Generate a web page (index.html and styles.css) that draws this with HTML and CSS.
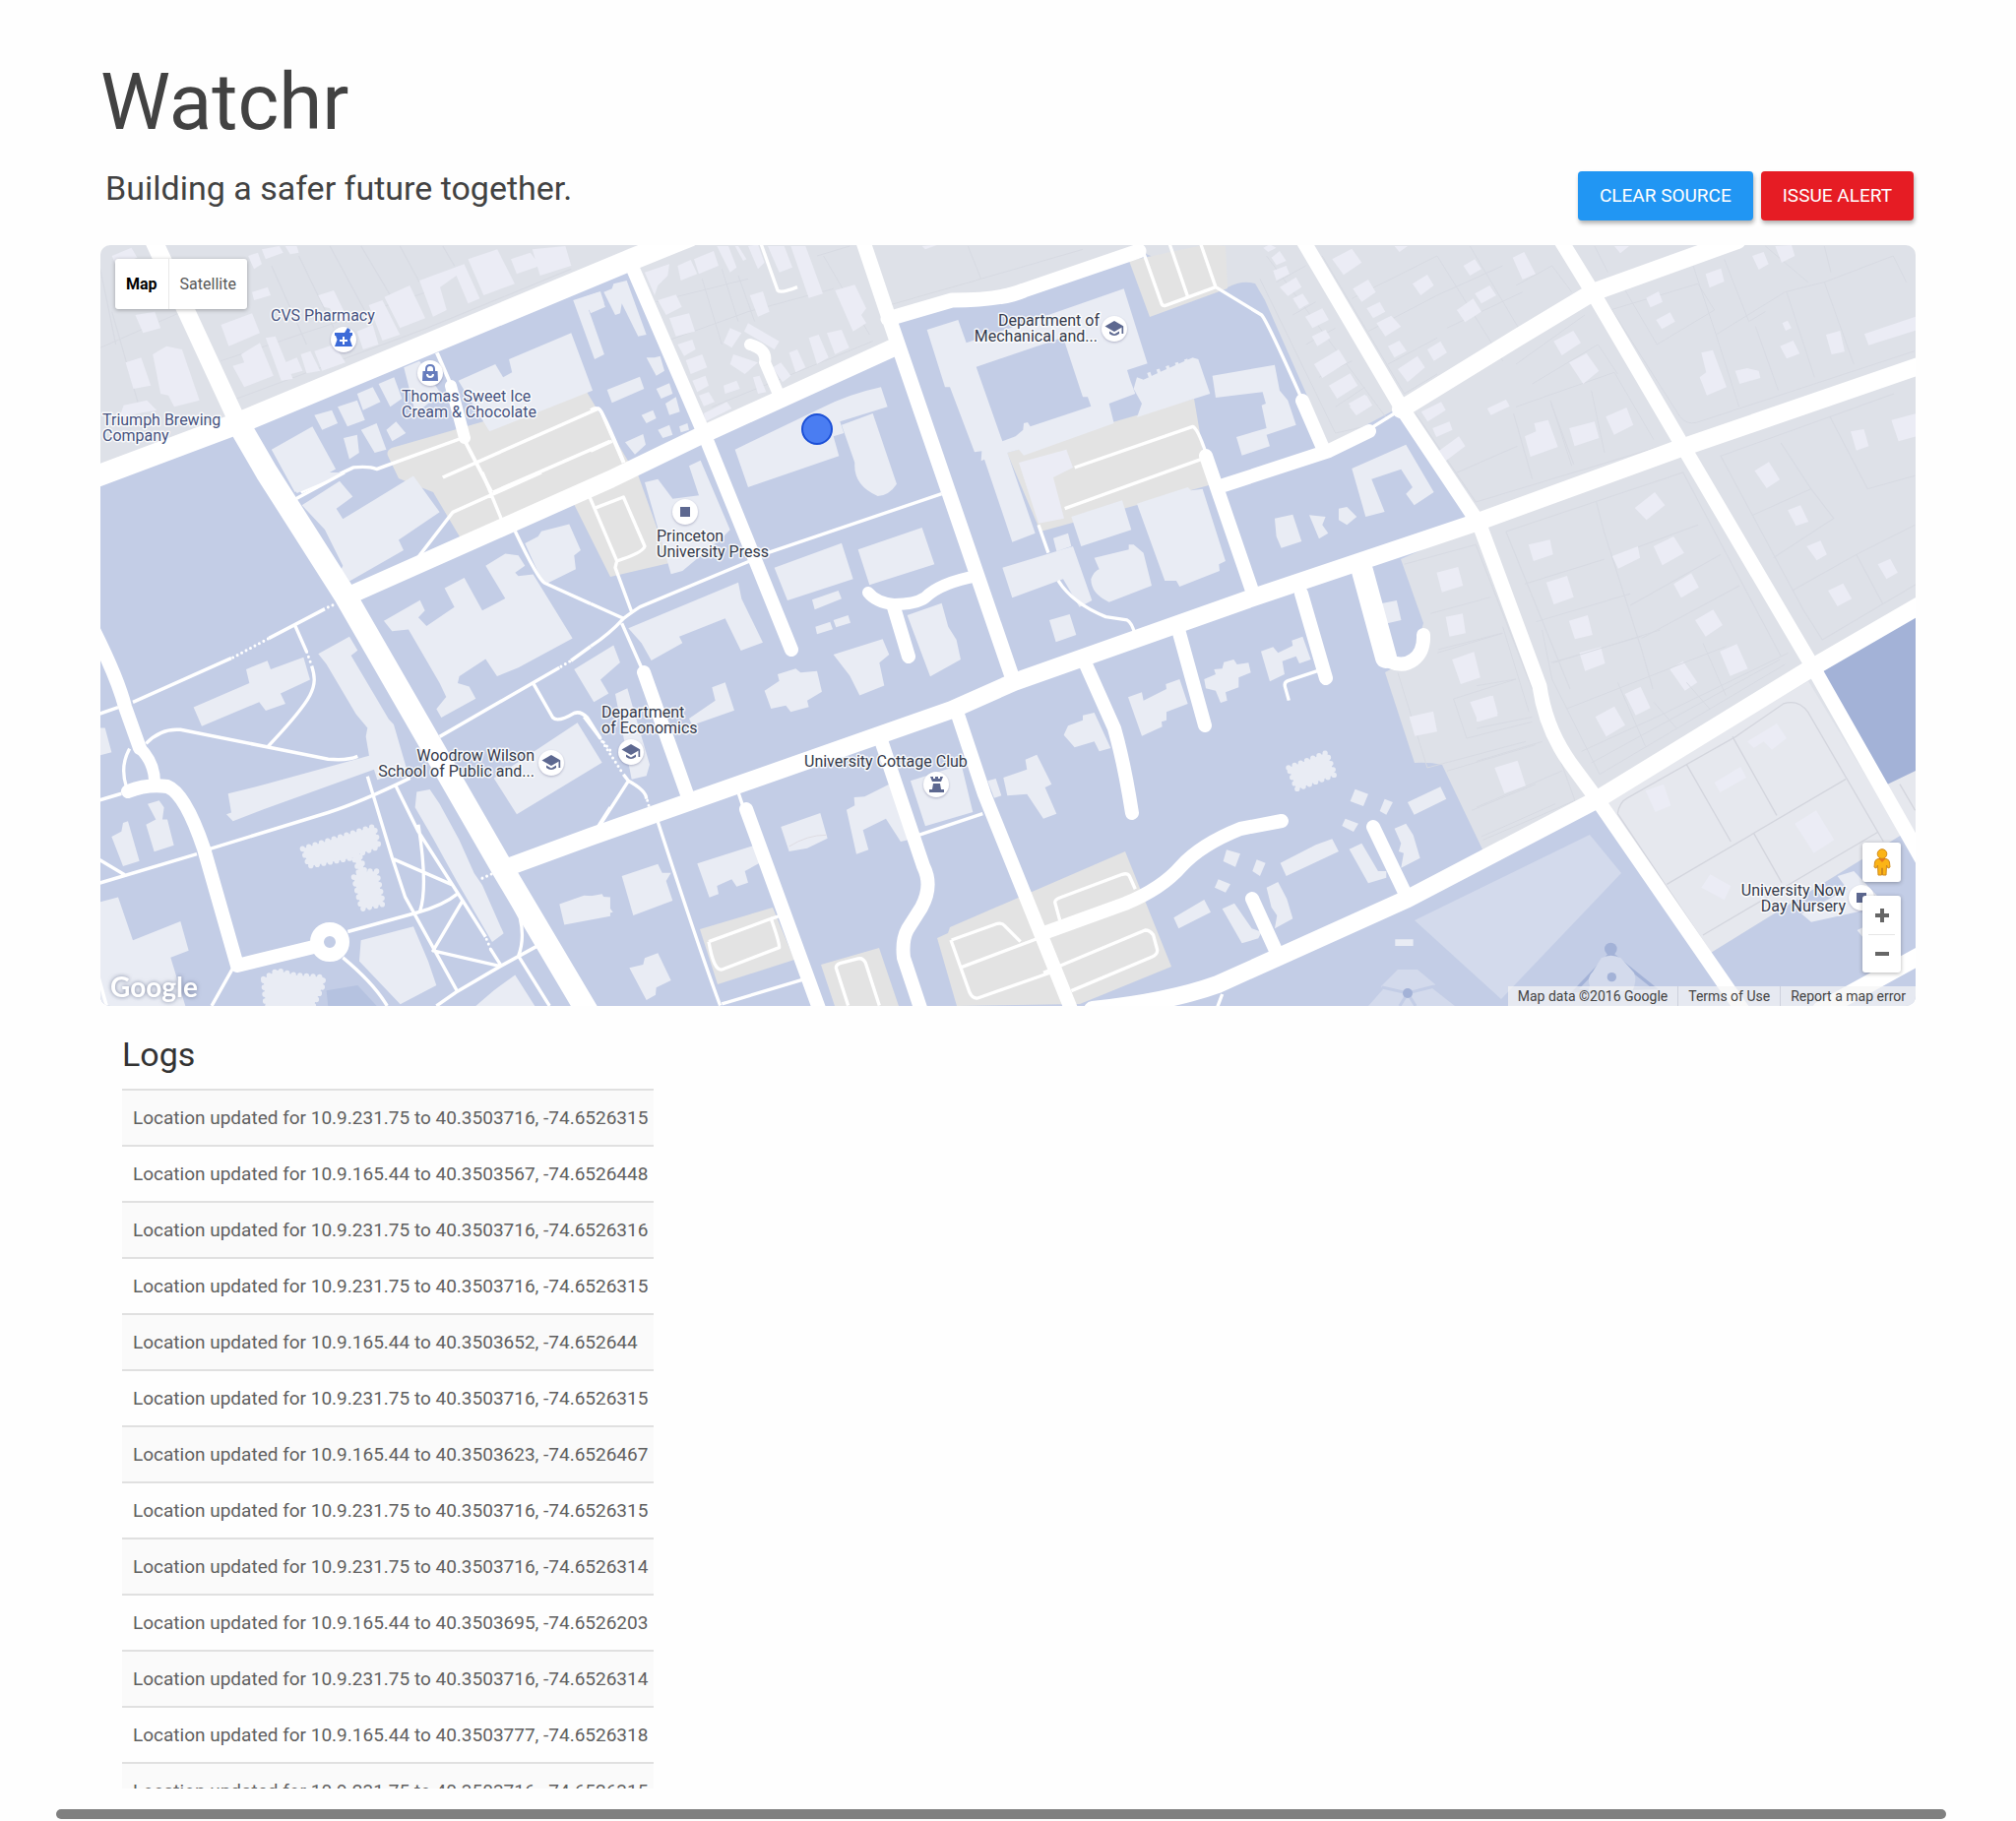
FILE: index.html
```html
<!DOCTYPE html>
<html lang="en">
<head>
<meta charset="utf-8">
<meta name="viewport" content="width=device-width, initial-scale=1">
<title>Watchr</title>
<link rel="stylesheet" href="styles.css">
</head>
<body>
<div class="page">
<main class="content">
  <header class="header">
    <h1 class="title">Watchr</h1>
    <div class="bar">
      <p class="tagline">Building a safer future together.</p>
      <div class="actions">
        <button class="btn btn-blue" type="button">CLEAR SOURCE</button>
        <button class="btn btn-red" type="button">ISSUE ALERT</button>
      </div>
    </div>
  </header>

  <section class="map" aria-label="Map">
    <svg class="map-canvas" viewBox="102 249 1844 773" preserveAspectRatio="xMidYMid slice">
      <defs>
        <g id="cap"><path d="M-9.500-2.500 0-8 9.500-2.500 0 3z"/><path d="M-5 2.500 0 5.500 5 2.500V5Q0 9 -5 5z"/><path d="M7.500-2H9.200V5H7.500z"/></g>
      </defs>
      <rect class="town" x="102" y="249" width="1844" height="773"/>
      <!-- campus grounds -->
      <path class="campus" d="M102 483 242 430 643 263 715 440 905 355 902 320 967 303 1017 303 1157 255 1247 292Q1262 284 1275 288L1285 305 1350 452 1423 413 1503 533 1423 568 1446 633 1436 668 1407 683 1437 775Q1452 774 1465 777L1507 865 1623 812 1767 1022H102z"/>
      <path class="lot-light" d="M1632 813 1837 692 1932 848 1738 968zM1917 797 1946 783V860z"/>
      <path class="campus" d="M1738 968 1932 848 1946 870V1022H1775z"/>
      <path class="dark" d="M1850 682 1946 622V783L1917 797z"/>
      <path class="field" d="M1437 935 1615 848 1647 887 1525 1015z"/>
      <path class="field" d="M1390 1022 1405 1005 1403 1002 1420 985H1440L1458 1000 1455 1004 1478 1022z"/>
      <path class="fieldline" d="M1404 1003 1430 1009 1457 1002M1430 1009 1422 1022M1430 1009 1438 1022"/>
      <circle class="mark" cx="1430" cy="1009" r="5"/>
      <!-- parking -->
      <path class="parking" d="M394 463Q392 458 398 455L596 398 645 480 468 547 440 500 405 486zM583 512 648 482 680 572 620 586zM1147 265 1227 248 1245 250 1247 293 1168 322zM1023 460 1213 405 1228 493 1057 540zM711 944 785 922 807 975 729 1000zM834 980 893 963 913 1022H848zM952 953 963 948 965 942 1143 865 1190 982 1097 1020 972 1022z"/>

      <!-- north-west blocks -->
      <g transform="translate(90 40) scale(.3954 .3333)">
        <path class="parcel" d="M30 940 240 830M60 830 130 1120M250 880 370 1100 870 880 1240 700M340 980 870 770M470 690 560 930M540 660 630 880M620 630 720 850M700 630 780 790M800 630 850 740M910 630 940 690M30 700 70 930"/>
        <path class="house" d="M60 660 110 635 125 665 70 690zM410 660 435 650 445 685 425 700zM445 640 490 630 500 650 455 670zM505 630H535L540 650 518 655zM340 870 420 835 440 895 360 935zM420 770 460 755 468 780 425 795zM370 995 400 985 392 960 440 925 475 1025 400 1060zM455 910 480 905 525 1035 495 1040zM505 985 535 970 550 1010 520 1020zM545 960 570 950 595 1010 560 1018zM580 950 630 930 660 985 600 1010zM590 780 630 765 665 850 640 860 620 820 605 815zM690 890 730 870 745 930 705 945zM720 810 755 795 800 900 755 918zM760 785 825 750 865 850 800 880zM850 735 965 685 1005 790 975 805 945 720 903 755 920 825 885 845zM975 670 1050 640 1095 745 1015 780zM1085 670 1135 650 1160 690 1100 715zM1140 640 1225 630 1240 690 1160 720zM95 985 135 970 160 1055 115 1065zM165 960 200 935 240 945 285 1100 220 1120 205 1085 185 1080zM90 1115 150 1100 175 1130 80 1150zM120 840 170 830 185 880 140 895z"/>
        <path class="hall" d="M470 1250 575 1180 635 1310 530 1380zM580 1145 625 1130 640 1170 600 1190zM640 1120 690 1100 710 1160 665 1180zM690 1080 730 1060 750 1105 705 1130zM745 1050 785 1030 805 1095 775 1120zM810 1000 850 980 905 1080 840 1140zM655 1215 690 1205 695 1260 670 1280zM700 1190 740 1170 765 1250 735 1260zM765 1190 790 1165 815 1200 780 1225zM950 1040 1045 990 1065 1030 1088 1015 1080 975 1240 895 1295 1070 1030 1195zM1245 795 1315 768 1325 805 1285 825 1325 960 1300 975z"/>
        <path class="lane" d="M895 955 930 1050M965 1220 1035 1380M910 1335 1310 1125Q1320 1130 1375 1290M1040 1380 1340 1225M545 1380 680 1305Q720 1300 740 1310L960 1215"/>
      </g>
      <!-- south-west campus -->
      <g transform="translate(100 480) scale(.3333 .3508)">
        <path class="hall" d="M570 0H755L605 60zM620 95 735 25 775 70 725 105 745 135 960 10 1040 115 915 195 930 225 765 315 740 280 745 270 690 165zM870 430 980 370 995 400 975 420 1000 445 1085 390 1055 335 1115 305 1170 400 1240 365 1180 270 1240 235 1280 240 1300 270 1270 290 1280 300 1325 295 1445 480 1280 565 1215 590 1180 540 1100 590 1095 610 1130 620 1150 655 1045 710 1030 685 1060 650 1040 610 945 455 895 460zM1300 205 1340 185 1350 170 1435 150 1470 225 1450 240 1455 280 1370 320 1350 310zM290 680 460 610 450 570 515 545 525 570 625 535 645 600 555 640 570 670 510 690 490 665 315 735zM670 525 765 475 790 515 770 530 885 715 900 730 940 860 850 890 840 860 505 975 410 1010 390 990 405 985 395 930 500 905 825 820 815 765 820 740 785 700 695 555zM150 960 185 950 200 970 195 1005 210 1005 230 1080 170 1098 145 1020 175 1005zM40 1055 70 1040 75 1015 90 1010 125 1125 75 1140zM970 925 1010 918 1040 960 1100 1065 1145 1160 1170 1195 1235 1335 1200 1360 1090 1180 1020 1060 965 970zM800 1355 960 1315 1005 1415 1030 1485 920 1540 795 1415zM0 1245 60 1230 105 1355 250 1300 275 1385 220 1405 265 1545H0zM0 740 20 740 40 810 0 820zM1205 885 1460 725 1535 840 1275 990zM1405 1250 1480 1225 1560 1230V1285L1420 1310zM1450 570 1570 500 1590 550 1530 600 1555 640 1510 665zM1150 1545 1205 1500 1270 1455 1330 1545z"/>
        <path class="hall scallop" d="M622 1090 840 1025 855 1083 795 1105 812 1155 848 1155 868 1250 802 1264 778 1172 795 1155 778 1115 642 1140z"/>
        <path class="hall scallop" d="M503 1467 545 1442 600 1456 685 1462 685 1485 655 1545H510z"/>
        <path class="deep" d="M695 1500 790 1485 850 1547H700z"/>
        <path class="lane" d="M0 700 60 680M105 665 405 538M520 480 690 395M600 445 635 520M650 560C670 620 660 650 515 795M145 785Q190 740 250 745L700 830Q760 835 790 822M0 950 70 930M0 1190 300 1105M340 1090 700 985Q800 955 950 885M0 1120 80 1165M820 880 895 1115 935 1230 1095 1505M905 905 975 1040 1110 1240 1180 1345M1195 1380 1225 1425M975 1020Q1005 1200 980 1270M900 1120 1080 1195M760 1330 970 1275Q1050 1255 1095 1220M1110 1240 1020 1385 1225 1430M745 1405Q840 1480 880 1545M410 1435 345 1545M1030 1545 1090 1505 1225 1430 1340 1370M1210 1160Q1270 1260 1285 1290 1300 1350 1280 1400L1375 1545M1040 765 1405 565M1440 545 1500 504M1325 610 1385 710Q1400 725 1450 697 1470 690 1490 710L1530 770M595 80 750 0M975 245 1080 115 1350 0M1170 0 1230 140M1270 170Q1340 310 1360 320L1500 380M1520 1030 1560 970M95 800Q65 850 85 910M0 1460 25 1545"/>
        <path class="dots" d="M410 536 520 480M700 390 725 380M635 520 650 560M1410 562 1440 545M1530 770 1560 805M1183 1352 1195 1380M1170 1175 1205 1160"/>
      </g>
      <!-- blocks round the press -->
      <g transform="translate(600 240) scale(.3333)">
        <path class="parcel" d="M200 200 480 130M230 320 480 230 740 160M340 130 400 330M400 100 450 260M450 120 500 260M710 60 850 300M850 60 910 210 1190 130 1500 40M1150 30 1190 130M370 520 860 320M690 60 790 30"/>
        <path class="house" d="M165 110 240 85 235 120 205 150 195 180zM265 90 305 72 325 115 275 135zM315 70 375 45 390 90 330 115zM385 30H420L445 95 425 110zM450 30 475 70 465 75 440 30zM480 30 510 25 530 80 510 100zM540 30H590L615 95 575 110zM610 30H655L708 175 665 188zM745 165 805 148 840 220 825 240 840 265 800 290zM485 180 525 168 545 230 510 245zM205 195 260 178 278 215 230 240zM240 250 300 235 318 290 260 305zM265 330 310 315 320 345 285 365zM290 378 340 360 355 400 305 420zM310 440 350 425 360 455 325 475zM330 485 360 475 378 505 345 518zM345 540 415 505 430 525 350 565zM480 265 575 320 560 345 468 290zM425 280 460 295 430 340 405 325zM435 360 510 385 470 420 425 390zM605 355 630 345 655 400 625 415zM665 310 695 300 725 370 690 390zM720 295 765 285 788 340 745 360zM555 400 580 385 610 425 585 445zM495 430 515 425 535 475 510 480zM405 455 445 440 455 465 410 480zM1010 30 1060 25 1020 40z"/>
        <path class="hall" d="M-20 185 25 170 45 215 0 235zM40 170 65 160 70 145 110 135 170 300 145 305 95 205 90 235 75 240zM50 468 150 428 163 465 65 508zM170 370 195 370 212 365 225 410 200 425zM200 465 240 448 250 480 215 495zM228 510 260 490 272 535 240 545zM155 545 190 530 200 555 170 570zM205 590 240 575 250 605 220 615zM270 580 295 570 300 590 275 598zM105 628 160 603 168 635 135 665zM440 650 700 525Q790 480 885 460L905 520 760 565 772 600 740 610 757 670 480 765zM765 575 860 540 933 755Q910 790 875 792 800 760 805 690zM165 750 205 740 250 800 330 790 300 700 335 683 425 895 405 915 280 1020 245 1030zM560 1010 765 935 800 1045 600 1110zM815 955 1010 888 1048 1000 850 1063zM675 1108 755 1080 765 1105 683 1138zM685 1190 730 1175 738 1198 690 1213zM740 1170 785 1155 792 1178 748 1192zM115 1195 450 1055 460 1105 525 1238 458 1263 410 1165 270 1220 280 1240 185 1293 155 1240zM965 1155 1070 1118 1090 1190 1115 1230 1128 1290 1035 1342zM740 1275 890 1228 910 1275 880 1300 895 1370 820 1400 790 1340z"/>
        <path class="lane" d="M540 965 1070 785M485 990 150 1130Q120 1150 100 1165 60 1210 0 1250M0 1120 100 1165M95 1180 155 1315M10 830 100 795 165 945Q160 965 80 990L75 1010 125 1145M-5 790 80 990M0 530Q25 515 35 540L100 690M0 655 65 625M520 25 570 165Q580 175 630 155"/>
        <path class="arrow" d="M286 475 300 512M290 512 303 528 308 505z"/>
      </g>
      <!-- engineering quadrangle and the streets east of it -->
      <g transform="translate(980 240) scale(.3333)">
        <path class="parcel" d="M900 130 1130 600 1220 580M920 60 1290 560M950 140 1040 90M1000 240 1070 200M1040 330 1130 280M1080 430 1180 380M1130 520 1220 460M1090 60 1340 480 1440 420M1180 190 1440 60M1230 290 1440 180M1290 390 1440 310M1440 60 1640 380M1540 30 1700 300M1440 180 1640 90M1470 280 1700 170"/>
        <path class="house" d="M910 35 930 25 950 35 925 48zM935 65 960 45 980 75 950 88zM940 105 980 90 990 115 950 135zM960 155 1010 125 1027 155 985 182zM1000 190 1030 175 1050 205 1020 222zM1038 245 1090 220 1110 255 1060 280zM1058 305 1100 285 1115 310 1075 335zM1065 390 1140 345 1165 385 1090 432zM1110 455 1175 418 1198 455 1135 495zM1170 510 1220 482 1242 515 1195 545zM1120 70 1180 38 1210 80 1155 118zM1183 160 1230 132 1253 170 1210 200zM1225 220 1265 200 1282 230 1245 250zM1255 265 1300 242 1330 275 1282 305zM1290 335 1325 318 1347 350 1310 370zM1320 405 1380 365 1403 400 1350 445zM1365 145 1410 117 1430 150 1390 180zM1310 30H1350L1325 48zM1410 345 1450 320 1470 355 1430 380zM1500 225 1550 190 1575 230 1525 262zM1555 175 1600 150 1620 180 1575 205zM1490 410 1540 380 1560 410 1510 440zM1520 90 1555 70 1575 100 1540 120z"/>
        <path class="hall" fill-rule="evenodd" d="M-115 285-20 255 5 325 270 235 485 160 557 388 495 408 505 440 520 480 440 510 455 570 180 668 165 650 130 660 215 905 145 932 60 680 50 685 52 655 30 658-45 460-60 460zM35 398 300 308 360 490 375 490 385 518 200 580 192 567 180 570 178 590 155 610 115 625z"/>
        <path class="hall" d="M525 430 545 437 600 412 695 370 712 375 748 480 700 495 525 552 540 510 515 465zM755 425 945 392 960 470 985 500 1010 575 920 605 930 640 845 668 828 612 920 585 905 515 918 510 908 475 765 492zM325 855 480 805 508 895 355 945zM525 815 680 765 690 775 725 770 795 990 775 1000 777 1020 655 1068 645 1050 610 1050zM270 920 315 905 325 945 280 960zM115 1010 330 945 388 1110 350 1130 300 1045 145 1102zM395 980 500 955 500 940 515 940 545 965 570 1065 440 1115Q385 1090 385 1045 395 1020 410 1015zM258 1170 320 1152 340 1215 278 1237zM945 860 1000 848 1027 930 965 950 950 915zM1050 850 1100 855 1090 880 1108 905 1080 922zM1140 830 1165 825 1195 855 1165 880 1140 865zM1180 708 1345 635 1430 780 1370 820 1345 785 1365 765 1330 710 1240 740 1280 840 1222 855z"/>
        <path class="comb" d="M560 428 700 378"/>
        <path class="house" d="M165 690 310 650 330 705 270 735 303 860 225 875z"/>
        <path class="lane" d="M545 50 600 205Q603 213 612 211L765 155 720 25M625 25 680 185M765 155 905 240Q920 255 1025 490M335 705 695 580Q710 585 735 660M305 830 720 680M225 880 255 965M285 1050Q330 1120 430 1160L495 1170Q508 1175 520 1215M1230 590 1310 540"/>
      </g>
      <!-- eating clubs -->
      <g transform="translate(600 640) scale(.3333)">
        <path class="hall" d="M75 195 112 178 130 240 180 410 170 445 125 455zM300 270 380 215 370 175 410 160 438 245 310 290zM530 185 575 155 570 135 625 118 640 130 690 125 705 188 660 215 665 235 610 250 595 230 550 240zM580 600 700 558 722 635 660 665 605 675zM780 548 805 535 803 510 835 508 910 470 968 640 945 645 900 575 830 610 847 670 810 683zM975 460 1130 410 1165 555 1020 598zM1210 460 1235 453 1252 505 1230 512zM1258 450 1330 425 1325 395 1360 380 1405 470 1385 480 1420 560 1380 575 1330 500 1270 505zM325 712 495 658 515 710 470 735 480 770 445 782 430 760 385 780 390 805 362 815zM95 750 205 713 218 740 245 740 230 765 250 825 130 870zM-50 820 35 805 50 835 68 860-20 880zM118 1030 160 1020 165 1000 205 985 245 1068 200 1090 198 1112 170 1128z"/>
        <path class="seam" d="M605 660Q660 625 718 625"/>
        <path class="lane" d="M360 950 550 880Q575 950 575 968L400 1035Q375 1040 360 950M550 880 580 870M785 1145 748 1030Q748 1020 760 1016L815 1002Q830 998 838 1015L880 1145M1100 945 1240 895Q1255 892 1262 902L1310 950M1098 945 1155 1105Q1165 1125 1180 1122L1400 1045M1130 1028 1390 930M205 585Q330 970 395 1145M400 1140 650 1065M450 495 465 540M1000 625 1195 560M-20 265 30 330M100 440 115 460Q170 490 170 515M115 460 25 600"/>
        <path class="dots" d="M35 340 100 440M173 520 180 545"/>
      </g>
      <!-- apartments -->
      <g transform="translate(1060 620) scale(.3333)">
        <path class="parcel" d="M1080 190 1170 480 1470 400M1200 130 1400 70M1250 270 1440 210M1400 50 1480 310M1250 270 1290 390 1490 340M1230 490 1500 410M1305 610 1500 530M1335 690 1560 590"/>
        <path class="hall" d="M258 265 300 250 305 275 375 240 373 225 415 210 440 285 375 310 375 335 360 340 362 355 300 383zM490 210 525 195 520 180 545 178 550 158 580 150 590 165 625 160 632 190 595 205 595 235 555 250 560 275 540 282 525 245 495 238zM663 125 700 112 715 130 760 108 757 92 790 80 815 150 780 162 770 140 728 155 735 195 690 217zM62 380 75 352 120 335 120 320 155 312 205 420 170 430 155 400 95 418zM950 545 990 560 975 597 935 582zM1040 575 1065 585 1045 623 1025 612zM920 635 960 650 945 675 910 657zM1110 585 1210 538 1228 575 1130 623zM1070 665 1105 650 1127 685 1148 755 1090 785 1098 740 1083 735 1090 710zM932 728 970 710 1020 795 1045 795 1045 815 990 832zM558 730 600 742 585 782 548 765zM650 760 677 770 660 810 637 795zM533 820 570 835 555 860 522 845zM722 770 830 715 880 697 900 735 740 810zM397 937 490 882 510 920 412 970zM680 845 715 828 742 880 760 940 705 970 712 930 695 905zM545 910 582 893 635 970 665 980 655 1000 605 1015zM1072 1003H1127V1023H1072z"/>
        <path class="hall scallop" d="M747 480 863 434 889 501 772 545z"/>
        <path class="house" d="M1300 280 1365 260 1385 322 1325 340zM1115 325 1188 308 1200 370 1132 383z"/>
        <path class="lane" d="M50 945 35 890Q35 882 50 876L240 805Q256 800 262 810L280 850M0 1105 310 975Q325 975 335 990L347 1035Q348 1050 330 1057L85 1160M835 185 745 215Q732 220 737 235L748 275M545 1170 530 1210"/>
      </g>
      <!-- north-east streets -->
      <g transform="translate(1540 150) scale(.3333)">
        <path class="parcel" d="M270 460 500 820Q520 845 550 838L1215 620M330 430 430 600 605 495 555 415 270 500M540 360 610 570 680 790M635 340 710 530 760 500M610 570 820 440 940 410 1150 330 1190 410M760 300 890 410M730 545 800 740M825 440 910 700M940 410 1030 660M940 300 960 380M0 660 210 510M50 720 250 600 310 690M0 790 300 685 420 890M105 770 170 970M230 740 270 930M0 420 110 360 170 440M240 300 280 380"/>
        <path class="house" d="M-10 335 25 318 60 385 20 402zM300 300H345L318 322zM578 385 625 368 635 408 590 427zM720 330 755 318 770 355 740 372zM790 300 840 297 850 330 810 350zM397 458 435 438 447 470 410 487zM427 525 470 502 485 530 445 553zM115 590 175 558 198 595 140 633zM162 655 215 627 253 680 205 720zM565 625 600 617 642 730 582 755 560 700 580 685zM668 680 705 672 740 680 745 702 682 720zM805 605 845 588 865 628 825 643zM812 535 828 527 840 550 822 558zM945 570 988 558 1002 622 962 630zM1062 568 1218 515V557L1075 602z"/>
      </g>
      <g transform="translate(1350 400) scale(.3827 .3333)">
        <path class="parcel" d="M470 420 940 240 1200 800M470 420 640 900M710 330 730 420 830 780 860 900M520 580 730 505M550 695 800 610M590 820 830 740M790 480 980 400M800 645 1040 490M830 745 1090 585M1500 0 1040 190 1260 660 1310 750 1560 580M1125 370 1280 290 1340 380 1180 500M1230 600 1400 490 1555 400M1330 70 1430 290 1555 250M1200 150 1280 290M1400 490 1470 640M340 240 500 160M490 60 540 260M590 30 650 215M230 60 390 330 910 150M390 460 540 900M200 520 390 460M270 670 430 620M290 780 460 730"/>
        <path class="house" d="M55 40 100 5 115 35 72 65zM245 55 298 25 310 50 262 85zM275 105 320 85 328 110 285 132zM285 180 345 130 362 160 310 205zM420 45 470 18 480 38 430 65zM520 130 550 115 545 90 582 80 608 162 535 192zM638 105 705 85 717 135 652 160zM735 70 790 42 808 95 757 125zM1385 115 1420 108 1433 160 1400 173zM1493 80 1560 60V130L1512 145zM1130 235 1168 208 1197 262 1162 288zM1218 355 1252 340 1273 390 1240 403zM1268 465 1305 448 1322 490 1295 508zM1325 600 1365 578 1388 625 1350 648zM1457 520 1490 503 1510 545 1480 565zM812 348 865 300 892 340 843 385zM752 495 820 465 826 500 768 533zM862 465 915 435 943 485 885 523zM530 460 587 445 595 490 543 510zM577 575 632 555 650 620 597 642zM637 692 687 675 700 735 653 748zM665 790 722 772 733 822 680 845zM915 580 962 547 982 590 935 622zM972 690 1020 658 1045 705 1000 740zM1038 785 1083 763 1112 838 1065 860zM905 840 940 815 978 880 945 905zM286 545 343 528 356 585 300 605zM310 680 355 670 363 730 320 740zM327 810 385 787 402 865 350 885z"/>
        <path class="hall" d="M137 640 180 630 192 690 155 700z"/>
      </g>
      <!-- south-east streets -->
      <g transform="translate(1500 640) scale(.3333)">
        <path class="parcel" d="M0 170 120 150M0 300 170 265M0 400 200 340M0 540 260 430M110 0 300 520 20 640M235 100 560 0M275 240 760 50M320 370 560 260 950 70M200 0 230 150 375 440 940 105M350 405 925 90M430 160 515 355M540 220 610 300M640 160 710 240M690 40 760 200"/>
        <path class="parcel strong" d="M430 560Q435 525 460 512L790 325 935 225Q980 210 1010 250L1240 645M640 410 775 645M780 325 915 565M580 775 1125 455M845 620 930 770M690 930 1225 615M430 560 715 985M1290 470 1337 550"/>
        <path class="house" d="M452 195 500 173 530 238 485 260zM362 265 420 233 453 290 395 325zM0 215 50 200 65 255 0 280zM55 420 125 398 150 475 85 498zM515 490 570 470 592 535 545 555zM725 465 805 417 822 450 742 495zM825 340 915 285 945 330 900 365 875 340 845 360zM970 590 1035 550 1090 640 1028 680zM712 745 775 780 755 823 685 785z"/>
        <path class="hall" d="M1100 750 1150 735 1240 830 1180 855 1020 890 990 865 1130 790zM1160 915 1180 905V940z"/>
        <path class="base" d="M300 1100 409 985 540 1090z"/>
        <path class="field" d="M345 1085Q335 1060 355 1040L380 1000Q409 985 440 1000L480 1045Q490 1070 475 1100H340z"/>
        <circle class="mark" cx="409" cy="972" r="19"/><circle class="mark" cx="412" cy="1058" r="14"/>
      </g>

      <!-- streets -->
      <g class="road">
        <path class="w12" d="M792 403 777 368Q780 355 762 350M882 602Q890 612 908 614 930 614 940 607 955 592 993 585M458 392 472 445M142 760Q158 775 157 798"/>
        <path class="w14" d="M643 273 715 440 804 660M895 752 938 880Q948 900 936 922L922 944Q916 955 918 973L937 1030M972 723 1000 807 1090 1030M654 683 698 807M758 822 834 1030M1063 947 1143 918Q1180 903 1200 880 1220 858 1260 842L1302 834M1103 675 1132 740Q1142 775 1150 826M1198 643 1224 737M1322 603 1347 689M1412 672C1430 680 1447 668 1446 645M1272 913 1298 970M1395 840 1430 913M1225 463 1273 603M1323 407 1343 453M1243 493 1350 458 1391 438M908 617 923 667M95 640Q120 690 127 718L142 760M130 804Q150 796 170 799 188 806 207 862L241 981 335 958"/>
        <path class="w16" d="M875 240 902 320 1030 693M902 324 967 305Q1017 305 1040 295L1157 255M1320 238 1423 413 1503 533 1564 697Q1570 740 1595 775L1623 813 1770 1026M1583 240 1618 297 1710 454 1843 680 1952 872"/>
        <path class="w18" d="M154 240 242 430M350 607 620 487 715 441 908 353M510 883 600 850 890 748 967 721 1030 693 1273 607 1499 531 1705 456 1952 371M1423 416 1540 344 1618 297 1765 244M1952 614 1843 677 1623 812 1430 913 1297 973 1237 1000Q1187 1018 1110 1026"/>
        <path class="w18" d="M1952 970 1850 1026"/>
        <path class="w22" d="M90 487 242 430 643 263 700 240M1384 580 1408 668"/>
        <path class="w24" d="M242 430 271 480 350 604 509 880 598 1030"/>
        <circle class="ring" cx="335" cy="957" r="13"/>
      </g>

      <!-- places -->
      <g class="pin">
        <circle cx="349" cy="345" r="13"/><circle cx="437" cy="379" r="13"/><circle cx="696" cy="520" r="13"/><circle cx="1132" cy="334" r="13"/><circle cx="641" cy="764" r="13"/><circle cx="560" cy="775" r="13"/><circle cx="951" cy="797" r="13"/><circle cx="1891" cy="912" r="13"/>
      </g>
      <path class="icon-blue" d="M340 338H350L353 333 356 335 355 338H358V341H357L355.500 345 358 352H340L342.500 345 341 341H340z"/>
      <path class="icon-plus" d="M349 342V350M345 346H353"/>
      <path class="icon-shop" d="M429.500 377H444.500L445 387H429z"/>
      <path class="icon-handle" d="M433 378V375Q433 371 437 371T441 375V378"/>
      <path class="icon-smile" d="M434 380Q434 383 437 383T440 380"/>
      <g class="icon-slate">
        <path d="M691 515H701V525H691zM1886 907H1896V917H1886z"/>
        <use href="#cap" x="1132" y="334"/><use href="#cap" x="641" y="764"/><use href="#cap" x="560" y="775"/>
        <path d="M945 789H948V791H950V789H953V791H955V789H958L956 794H947zM948 796H955L956 802H959V805H944V802H947z"/>
      </g>
      <circle class="here" cx="830" cy="436" r="15"/>
      <g class="label">
        <g class="shop"><text x="275" y="326">CVS Pharmacy</text>
        <text x="408" y="408">Thomas Sweet Ice<tspan x="408" dy="16">Cream &amp; Chocolate</tspan></text>
        <text x="104" y="432">Triumph Brewing<tspan x="104" dy="16">Company</tspan></text></g>
        <text x="667" y="550">Princeton<tspan x="667" dy="16">University Press</tspan></text>
        <text x="611" y="729">Department<tspan x="611" dy="16">of Economics</tspan></text>
        <text x="817" y="779">University Cottage Club</text>
        <g class="end"><text x="1117" y="331">Department of<tspan x="1115" dy="16">Mechanical and...</tspan></text>
        <text x="543" y="773">Woodrow Wilson<tspan x="543" dy="16">School of Public and...</tspan></text>
        <text x="1875" y="910">University Now<tspan x="1875" dy="16">Day Nursery</tspan></text></g>
      </g>
      <text class="logo" x="112" y="1013">Google</text>
    </svg>

    <div class="map-type">
      <button class="type-btn selected" type="button">Map</button>
      <button class="type-btn" type="button">Satellite</button>
    </div>
    <div class="map-tools">
      <button class="tool" type="button" aria-label="Street View">
        <svg width="18" height="28" viewBox="0 0 18 28"><path class="peg" d="M5 10.500Q2 11 1.500 14L1 19 3 20 4.500 17 5 27H8.500V20H9.500V27H13L13.500 17 15 20 17 19 16.500 14Q16 11 13 10.500z"/><circle class="peg" cx="9" cy="5.500" r="4.800"/><path class="scarf" d="M5.500 10.500H12.500L9 14z"/></svg>
      </button>
      <div class="zoom">
        <button class="tool" type="button" aria-label="Zoom in"><svg width="16" height="16" viewBox="0 0 16 16"><path class="sign" d="M8 1V15M1 8H15"/></svg></button>
        <button class="tool" type="button" aria-label="Zoom out"><svg width="16" height="16" viewBox="0 0 16 16"><path class="sign" d="M1 8H15"/></svg></button>
      </div>
    </div>
    <div class="credits">
      <span class="credit">Map data ©2016 Google</span>
      <a class="credit" href="#terms">Terms of Use</a>
      <a class="credit" href="#report">Report a map error</a>
    </div>
  </section>

  <section class="logs">
    <h2 class="logs-title" id="logs-title">Logs</h2>
    <table class="log-table" aria-labelledby="logs-title">
      <tbody>
        <tr><td>Location updated for 10.9.231.75 to 40.3503716, -74.6526315</td></tr>
        <tr><td>Location updated for 10.9.165.44 to 40.3503567, -74.6526448</td></tr>
        <tr><td>Location updated for 10.9.231.75 to 40.3503716, -74.6526316</td></tr>
        <tr><td>Location updated for 10.9.231.75 to 40.3503716, -74.6526315</td></tr>
        <tr><td>Location updated for 10.9.165.44 to 40.3503652, -74.652644</td></tr>
        <tr><td>Location updated for 10.9.231.75 to 40.3503716, -74.6526315</td></tr>
        <tr><td>Location updated for 10.9.165.44 to 40.3503623, -74.6526467</td></tr>
        <tr><td>Location updated for 10.9.231.75 to 40.3503716, -74.6526315</td></tr>
        <tr><td>Location updated for 10.9.231.75 to 40.3503716, -74.6526314</td></tr>
        <tr><td>Location updated for 10.9.165.44 to 40.3503695, -74.6526203</td></tr>
        <tr><td>Location updated for 10.9.231.75 to 40.3503716, -74.6526314</td></tr>
        <tr><td>Location updated for 10.9.165.44 to 40.3503777, -74.6526318</td></tr>
        <tr><td>Location updated for 10.9.231.75 to 40.3503716, -74.6526315</td></tr>
      </tbody>
    </table>
  </section>
</main>
<div class="scroll-thumb"></div>
</div>
</body>
</html>
```
FILE: styles.css
```css
* { box-sizing: border-box; }
body { margin: 0; background: #fefefe; color: #424242; font-family: Roboto, "Liberation Sans", sans-serif; }
.page { display: flex; flex-direction: column; height: 100vh; }
.content { flex: 1; min-height: 0; display: flex; flex-direction: column; padding: 57px 102px 0; }

.title { margin: 0; font-size: 80px; line-height: 94px; font-weight: 400; }
.bar { display: flex; justify-content: space-between; padding: 23px 2px 25px 5px; }
.tagline { margin: 0; font-size: 34px; line-height: 34px; }
.actions { display: flex; gap: 8px; }
.btn { height: 50px; padding: 0 22px; border: 0; border-radius: 4px; color: #fff; font: 400 19px/50px Roboto, sans-serif; box-shadow: 1px 3px 4px rgba(0, 0, 0, .3); }
.btn-blue { background: #2196f3; }
.btn-red { background: #e61c24; }

.map { position: relative; flex: none; height: 773px; border-radius: 10px; overflow: hidden; }
.map-canvas { display: block; width: 100%; height: 100%; }
.town { fill: #dee1e8; }
.campus { fill: #c3cde6; }
.lot-light { fill: #e6e8ee; }
.dark, .mark { fill: #a3b2d7; }
.deep { fill: #b5c2e0; }
.field { fill: #d3daec; }
.fieldline { fill: none; stroke: #c3cde6; stroke-width: 3; }
.base { fill: none; stroke: #a3b2d7; stroke-width: 10; }
.parking { fill: #e3e3e3; }
.hall { fill: #e9ecf4; }
.house { fill: #ebecf5; }
.scallop { stroke: #e9ecf4; stroke-width: 16; stroke-linecap: round; stroke-dasharray: 0 20; }
.comb { fill: none; stroke: #e9ecf4; stroke-width: 24; stroke-dasharray: 10 20; }
.seam { fill: none; stroke: #dedce2; stroke-width: 3; }
.parcel { fill: none; stroke: #d7dae2; stroke-width: 3; }
.strong { stroke: #d3d5dd; stroke-width: 4; }
.lane { fill: none; stroke: #fff; stroke-width: 10; stroke-linejoin: round; }
.dots { fill: none; stroke: #fff; stroke-width: 9; stroke-linecap: round; stroke-dasharray: 0 15; }
.arrow { fill: #b7bfd8; stroke: #b7bfd8; stroke-width: 6; }
.road { fill: none; stroke: #fff; stroke-linecap: round; stroke-linejoin: round; }
.w12 { stroke-width: 12; }
.w14 { stroke-width: 14; }
.w16 { stroke-width: 15; }
.w18 { stroke-width: 18; }
.w22 { stroke-width: 22; }
.w24 { stroke-width: 23; }
.ring { fill: #c3cde6; stroke-width: 14; }
.pin { fill: #fff; filter: drop-shadow(0 1px 1px rgba(90, 90, 130, .4)); }
.icon-blue { fill: #3d6bd8; }
.icon-plus { fill: none; stroke: #fff; stroke-width: 2; }
.icon-shop { fill: #667cbd; }
.icon-handle { fill: none; stroke: #667cbd; stroke-width: 2; }
.icon-smile { fill: none; stroke: #fff; stroke-width: 2; }
.icon-slate { fill: #5d6890; }
.here { fill: #4a7df2; stroke: #1b4fd6; stroke-width: 2; }
.label { font-size: 16px; fill: #343a4b; stroke: rgba(255, 255, 255, .85); stroke-width: 3; stroke-linejoin: round; paint-order: stroke; }
.shop { fill: #46527f; }
.end { text-anchor: end; }
.logo { font: 700 28px Lato, sans-serif; fill: #fff; filter: drop-shadow(0 0 2px rgba(100, 110, 140, .8)); }

.map-type { position: absolute; left: 15px; top: 14px; display: flex; border-radius: 3px; background: #fff; box-shadow: 0 1px 4px rgba(0, 0, 0, .3); }
.type-btn { height: 51px; padding: 0 11px; border: 0; background: none; color: #565656; font: 400 16px Roboto, sans-serif; }
.selected { color: #000; font-weight: 700; border-right: 1px solid #e8e8e8; }
.map-tools { position: absolute; right: 15px; bottom: 34px; display: grid; gap: 14px; }
.tool { display: grid; place-items: center; width: 39px; height: 40px; padding: 0; border: 0; border-radius: 3px; background: #fff; box-shadow: 0 1px 4px rgba(0, 0, 0, .3); }
.zoom { border-radius: 3px; background: #fff; box-shadow: 0 1px 4px rgba(0, 0, 0, .3); }
.zoom .tool { height: 39px; box-shadow: none; background: none; }
.zoom .tool + .tool { background: linear-gradient(#e6e6e6, #e6e6e6) center top / 27px 1px no-repeat; }
.sign { fill: none; stroke: #666; stroke-width: 4; }
.peg { fill: #fbb416; stroke: #d08a1c; stroke-width: 1; }
.scarf { fill: #e5761c; }
.credits { position: absolute; right: 0; bottom: 0; display: flex; height: 20px; background: rgba(245, 245, 245, .7); }
.credit { padding: 0 10px; color: #444; font-size: 14px; line-height: 20px; text-decoration: none; }
.credit + .credit { border-left: 1px solid #cdd1dc; }

.logs { flex: 1; min-height: 0; overflow: hidden; padding: 27px 22px 0; }
.logs-title { margin: 0 0 12px; font-size: 34px; line-height: 45px; font-weight: 400; color: #333; }
.log-table { border-collapse: collapse; color: #5f5f5f; font-size: 19px; line-height: 24px; }
.log-table td { height: 57px; padding: 0 6px 0 11px; border-top: 2px solid #e0e0e0; white-space: nowrap; }
.log-table tr:nth-child(odd) { background: #fafafa; }
.scroll-thumb { flex: none; height: 10px; margin: 21px 71px 2px 57px; border-radius: 5px; background: #808080; }
```
